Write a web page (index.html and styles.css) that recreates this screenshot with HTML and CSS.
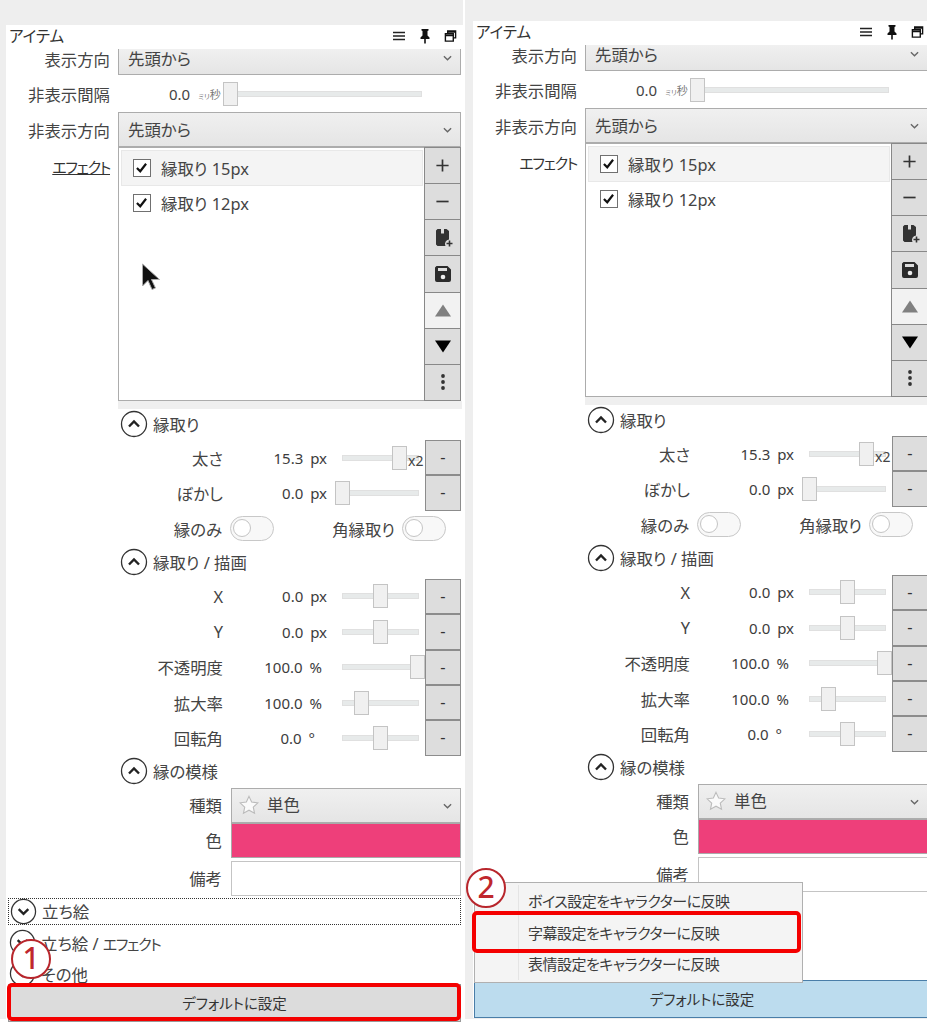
FILE: index.html
```html
<!DOCTYPE html>
<html lang="ja">
<head>
    <meta charset="UTF-8">
    <title>アイテム</title>
    <link rel="stylesheet" href="styles.css">
</head>
<body>

    <svg class="defs" width="0" height="0">
        <symbol id="i-menu" viewBox="0 0 14 12"><path d="M1 2.500h12M1 6h12M1 9.500h12" stroke="#222" stroke-width="1.400"/></symbol>
        <symbol id="i-pin" viewBox="0 0 14 16"><path d="M3.500 1h7v1.500l-1 .5v4.500l2 2v1.500h-9V9.500l2-2V3l-1-.5zM6.200 11h1.600v4.500H6.200z" fill="#111"/></symbol>
        <symbol id="i-float" viewBox="0 0 14 14"><path d="M4 4V1.500h8.500V9H10M1.500 4.500H10V12.500H1.500zM1.500 6.500H10M4 2.800h8.500" fill="none" stroke="#111" stroke-width="1.500"/></symbol>
        <symbol id="i-plus" viewBox="0 0 16 16"><path d="M8 1.500v13M1.500 8h13" stroke="#333" stroke-width="1.800"/></symbol>
        <symbol id="i-minus" viewBox="0 0 16 16"><path d="M1.500 8h13" stroke="#333" stroke-width="1.800"/></symbol>
        <symbol id="i-saveas" viewBox="0 0 18 20"><path d="M1 2.500 2.500 1H6v4.500h3V1h2.500L14 3v8.500a4.500 4.500 0 0 0-3.500 6.500H2.500L1 16.500z" fill="#333"/><path d="M14.500 12.500v6M11.500 15.500h6" stroke="#333" stroke-width="1.600"/></symbol>
        <symbol id="i-save" viewBox="0 0 18 18"><path d="M2.500 1h11L17 4.500V15a2 2 0 0 1-2 2H3a2 2 0 0 1-2-2V2.500zM4 3v3h9V3z" fill="#2b2b2b" fill-rule="evenodd"/><circle cx="9" cy="12" r="2.300" fill="#eee"/></symbol>
        <symbol id="i-up" viewBox="0 0 16 14"><path d="M8 1 16 13H0z" fill="#808080"/></symbol>
        <symbol id="i-down" viewBox="0 0 16 14"><path d="M0 1H16L8 13z" fill="#000"/></symbol>
        <symbol id="i-more" viewBox="0 0 6 18"><circle cx="3" cy="3" r="1.900" fill="#333"/><circle cx="3" cy="9" r="1.900" fill="#333"/><circle cx="3" cy="15" r="1.900" fill="#333"/></symbol>
        <symbol id="i-chev" viewBox="0 0 10 6"><path d="M1 1l4 4 4-4" fill="none" stroke="#666" stroke-width="1.500"/></symbol>
        <symbol id="i-exp-up" viewBox="0 0 28 28"><circle cx="14" cy="14" r="12.500" fill="#fff" stroke="#333" stroke-width="1.300"/><path d="M9 16.500l5-5 5 5" fill="none" stroke="#222" stroke-width="2.400"/></symbol>
        <symbol id="i-exp-down" viewBox="0 0 28 28"><circle cx="14" cy="14" r="12.500" fill="#fff" stroke="#333" stroke-width="1.300"/><path d="M9 11.500l5 5 5-5" fill="none" stroke="#222" stroke-width="2.400"/></symbol>
        <symbol id="i-star" viewBox="0 0 22 22"><path d="M11 1.500l2.900 6.300 6.900.8-5.100 4.700 1.400 6.800L11 16.700l-6.100 3.400 1.400-6.800L1.200 8.600l6.900-.8z" fill="#fafafa" stroke="#bbb" stroke-width="1.200"/></symbol>
        <symbol id="i-check" viewBox="0 0 18 18"><path d="M3.500 9.500l4 4 7-9" fill="none" stroke="#111" stroke-width="2.600"/></symbol>
    </svg>

    <section class="pane pane-left">
        <div class="pane-head">
            <span class="pane-title">アイテム</span>
            <span class="pane-tools">
                <svg class="tool-menu"><use href="#i-menu"/></svg>
                <svg class="tool-pin"><use href="#i-pin"/></svg>
                <svg class="tool-float"><use href="#i-float"/></svg>
            </span>
        </div>
        <div class="pane-body">
            <div class="form-row row-cut">
                <span class="label">表示方向</span>
                <div class="combo combo-cut">先頭から<svg class="chev"><use href="#i-chev"/></svg></div>
            </div>
            <div class="form-row row-interval">
                <span class="label">非表示間隔</span>
                <div class="interval">
                    <span class="interval-val">0.0</span><span class="interval-unit"><small>ミリ</small>秒</span>
                    <div class="slider slider-wide"><i class="thumb thumb-0"></i></div>
                </div>
            </div>
            <div class="form-row row-combo">
                <span class="label">非表示方向</span>
                <div class="combo">先頭から<svg class="chev"><use href="#i-chev"/></svg></div>
            </div>
            <div class="form-row row-effects">
                <span class="label label-top label-link kata">エフェクト</span>
                <div class="effects">
                    <div class="effect-list">
                        <div class="effect effect-on"><span class="check"><svg><use href="#i-check"/></svg></span>縁取り 15px</div>
                        <div class="effect"><span class="check"><svg><use href="#i-check"/></svg></span>縁取り 12px</div>
                    </div>
                    <div class="effect-btns">
                        <div class="sq"><svg class="ic16"><use href="#i-plus"/></svg></div>
                        <div class="sq"><svg class="ic16"><use href="#i-minus"/></svg></div>
                        <div class="sq"><svg class="ic-saveas"><use href="#i-saveas"/></svg></div>
                        <div class="sq"><svg class="ic-save"><use href="#i-save"/></svg></div>
                        <div class="sq sq-off"><svg class="ic-tri"><use href="#i-up"/></svg></div>
                        <div class="sq"><svg class="ic-tri"><use href="#i-down"/></svg></div>
                        <div class="sq"><svg class="ic-more"><use href="#i-more"/></svg></div>
                    </div>
                </div>
            </div>
            <div class="strip"></div>

            <div class="group-head head-a"><svg class="exp"><use href="#i-exp-up"/></svg>縁取り</div>
            <div class="param"><span class="p-label">太さ</span><span class="p-val">15.3 px</span><div class="slider"><i class="thumb thumb-72"></i></div><span class="x2">x2</span><div class="reset">-</div></div>
            <div class="param"><span class="p-label">ぼかし</span><span class="p-val">0.0 px</span><div class="slider"><i class="thumb thumb-0"></i></div><div class="reset">-</div></div>
            <div class="toggles">
                <span class="t-label t-label-a">縁のみ</span><i class="toggle"></i>
                <span class="t-label t-label-b">角縁取り</span><i class="toggle"></i>
            </div>

            <div class="group-head head-b"><svg class="exp"><use href="#i-exp-up"/></svg>縁取り / 描画</div>
            <div class="param"><span class="p-label">X</span><span class="p-val">0.0 px</span><div class="slider"><i class="thumb thumb-mid"></i></div><div class="reset">-</div></div>
            <div class="param"><span class="p-label">Y</span><span class="p-val">0.0 px</span><div class="slider"><i class="thumb thumb-mid"></i></div><div class="reset">-</div></div>
            <div class="param"><span class="p-label">不透明度</span><span class="p-val p-val-pct">100.0 %</span><div class="slider"><i class="thumb thumb-100"></i></div><div class="reset">-</div></div>
            <div class="param"><span class="p-label">拡大率</span><span class="p-val p-val-pct">100.0 %</span><div class="slider"><i class="thumb thumb-25"></i></div><div class="reset">-</div></div>
            <div class="param"><span class="p-label">回転角</span><span class="p-val p-val-deg">0.0 °</span><div class="slider"><i class="thumb thumb-mid"></i></div><div class="reset">-</div></div>

            <div class="group-head head-b"><svg class="exp"><use href="#i-exp-up"/></svg>縁の模様</div>
            <div class="prop"><span class="p-label">種類</span><div class="combo combo-star"><svg class="star"><use href="#i-star"/></svg>単色<svg class="chev"><use href="#i-chev"/></svg></div></div>
            <div class="prop"><span class="p-label">色</span><div class="color"></div></div>
            <div class="prop prop-memo"><span class="p-label">備考</span><div class="memo"></div></div>

            <div class="fold fold-focus"><svg class="exp"><use href="#i-exp-down"/></svg>立ち絵</div>
            <div class="fold fold-mid"><svg class="exp"><use href="#i-exp-down"/></svg><span>立ち絵 / <span class="kata">エフェクト</span></span></div>
            <div class="fold fold-last"><svg class="exp"><use href="#i-exp-down"/></svg>その他</div>
        </div>
        <div class="default-btn default-pressed">デフォルトに設定</div>

        <svg class="cursor" viewBox="0 0 20 28"><path d="M1.500 1v22l5.500-5.500 4 9 3.500-1.500-4-8.500h8z" fill="#111" stroke="#aaa" stroke-width="1"/></svg>
        <div class="mark mark-btn"></div>
        <div class="badge badge-one">1</div>
    </section>

    <div class="shot-gap"></div>

    <section class="pane pane-right">
        <div class="pane-head">
            <span class="pane-title">アイテム</span>
            <span class="pane-tools">
                <svg class="tool-menu"><use href="#i-menu"/></svg>
                <svg class="tool-pin"><use href="#i-pin"/></svg>
                <svg class="tool-float"><use href="#i-float"/></svg>
            </span>
        </div>
        <div class="pane-body">
            <div class="form-row row-cut">
                <span class="label">表示方向</span>
                <div class="combo combo-cut">先頭から<svg class="chev"><use href="#i-chev"/></svg></div>
            </div>
            <div class="form-row row-interval">
                <span class="label">非表示間隔</span>
                <div class="interval">
                    <span class="interval-val">0.0</span><span class="interval-unit"><small>ミリ</small>秒</span>
                    <div class="slider slider-wide"><i class="thumb thumb-0"></i></div>
                </div>
            </div>
            <div class="form-row row-combo">
                <span class="label">非表示方向</span>
                <div class="combo">先頭から<svg class="chev"><use href="#i-chev"/></svg></div>
            </div>
            <div class="form-row row-effects">
                <span class="label label-top kata">エフェクト</span>
                <div class="effects">
                    <div class="effect-list">
                        <div class="effect effect-on"><span class="check"><svg><use href="#i-check"/></svg></span>縁取り 15px</div>
                        <div class="effect"><span class="check"><svg><use href="#i-check"/></svg></span>縁取り 12px</div>
                    </div>
                    <div class="effect-btns">
                        <div class="sq"><svg class="ic16"><use href="#i-plus"/></svg></div>
                        <div class="sq"><svg class="ic16"><use href="#i-minus"/></svg></div>
                        <div class="sq"><svg class="ic-saveas"><use href="#i-saveas"/></svg></div>
                        <div class="sq"><svg class="ic-save"><use href="#i-save"/></svg></div>
                        <div class="sq sq-off"><svg class="ic-tri"><use href="#i-up"/></svg></div>
                        <div class="sq"><svg class="ic-tri"><use href="#i-down"/></svg></div>
                        <div class="sq"><svg class="ic-more"><use href="#i-more"/></svg></div>
                    </div>
                </div>
            </div>
            <div class="strip"></div>

            <div class="group-head head-a"><svg class="exp"><use href="#i-exp-up"/></svg>縁取り</div>
            <div class="param"><span class="p-label">太さ</span><span class="p-val">15.3 px</span><div class="slider"><i class="thumb thumb-72"></i></div><span class="x2">x2</span><div class="reset">-</div></div>
            <div class="param"><span class="p-label">ぼかし</span><span class="p-val">0.0 px</span><div class="slider"><i class="thumb thumb-0"></i></div><div class="reset">-</div></div>
            <div class="toggles">
                <span class="t-label t-label-a">縁のみ</span><i class="toggle"></i>
                <span class="t-label t-label-b">角縁取り</span><i class="toggle"></i>
            </div>

            <div class="group-head head-b"><svg class="exp"><use href="#i-exp-up"/></svg>縁取り / 描画</div>
            <div class="param"><span class="p-label">X</span><span class="p-val">0.0 px</span><div class="slider"><i class="thumb thumb-mid"></i></div><div class="reset">-</div></div>
            <div class="param"><span class="p-label">Y</span><span class="p-val">0.0 px</span><div class="slider"><i class="thumb thumb-mid"></i></div><div class="reset">-</div></div>
            <div class="param"><span class="p-label">不透明度</span><span class="p-val p-val-pct">100.0 %</span><div class="slider"><i class="thumb thumb-100"></i></div><div class="reset">-</div></div>
            <div class="param"><span class="p-label">拡大率</span><span class="p-val p-val-pct">100.0 %</span><div class="slider"><i class="thumb thumb-25"></i></div><div class="reset">-</div></div>
            <div class="param"><span class="p-label">回転角</span><span class="p-val p-val-deg">0.0 °</span><div class="slider"><i class="thumb thumb-mid"></i></div><div class="reset">-</div></div>

            <div class="group-head head-b"><svg class="exp"><use href="#i-exp-up"/></svg>縁の模様</div>
            <div class="prop"><span class="p-label">種類</span><div class="combo combo-star"><svg class="star"><use href="#i-star"/></svg>単色<svg class="chev"><use href="#i-chev"/></svg></div></div>
            <div class="prop"><span class="p-label">色</span><div class="color"></div></div>
            <div class="prop prop-memo"><span class="p-label">備考</span><div class="memo"></div></div>
        </div>
        <div class="default-btn default-hover">デフォルトに設定</div>

        <div class="menu">
            <div class="menu-item">ボイス設定をキャラクターに反映</div>
            <div class="menu-item">字幕設定をキャラクターに反映</div>
            <div class="menu-item">表情設定をキャラクターに反映</div>
        </div>
        <div class="mark mark-menu"></div>
        <div class="badge badge-two">2</div>
    </section>

</body>
</html>
```

FILE: styles.css
```css
html, body { margin: 0; height: 100%; overflow: hidden; }
body {
    display: flex;
    width: 927px;
    height: 1024px;
    padding-left: 6px;
    box-sizing: border-box;
    background: linear-gradient(#eeeeee 1019px, #fff 1019px);
    font-family: "Noto Sans", "Noto Sans CJK JP", sans-serif;
    font-size: 16.4px;
    font-feature-settings: "palt";
    color: #444;
}
.defs { position: absolute; }
.kata { font-size: 15px; letter-spacing: -1.300px; }

/* panes */
.pane { position: relative; flex: 0 0 457px; background: #fff; display: flex; flex-direction: column; }
.pane-left { margin-top: 25px; height: 997px; }
.pane-right { margin-top: 21px; height: 997px; }
.shot-gap { flex: 0 0 2px; margin-right: 8px; background: #fff; }
.pane-head { flex: 0 0 24px; display: flex; align-items: center; justify-content: space-between; padding: 0 6px 2px 3px; box-sizing: border-box; background: #fff; }
.pane-title { font-size: 15.500px; color: #333; line-height: 22px; }
.pane-tools { display: flex; align-items: center; gap: 12px; }
.tool-menu { width: 14px; height: 12px; }
.tool-pin { width: 14px; height: 16px; }
.tool-float { width: 13px; height: 14px; }
.pane-body { flex: 1; min-height: 0; }

/* upper form */
.form-row { display: flex; padding-right: 2px; }
.label { flex: 0 0 104px; text-align: right; align-self: center; white-space: nowrap; }
.label-top { align-self: flex-start; margin-top: 9px; color: #333; }
.label-link { text-decoration: underline; }
.row-cut { height: 27px; }
.row-interval { height: 36px; }
.row-combo { height: 35px; }
.row-effects { height: 254px; }
.row-cut > .label { padding-bottom: 7px; }
.combo {
    position: relative;
    flex: 1;
    margin-left: 8px;
    padding-left: 9px;
    line-height: 34px;
    border: 1px solid #acacac;
    border-width: 1.500px 1px;
    background: linear-gradient(#f0f0f0, #e5e5e5);
    white-space: nowrap;
}
.combo-cut { border-top: 0; height: 26px; line-height: 20px; box-sizing: border-box; }
.chev { position: absolute; right: 8px; top: 14px; width: 9px; height: 6px; }
.combo-cut .chev { top: 6px; }
.interval { display: flex; align-items: center; margin-left: 8px; flex: 1; }
.interval-val { margin-left: 51px; font-size: 15px; }
.interval-unit { flex: 0 0 24px; margin: 0 0 0 8px; font-size: 11px; color: #777; white-space: nowrap; }
.interval-unit small { font-size: 7px; }
.slider { position: relative; height: 6px; background: #e7eaea; border: 1px solid #e0e0e0; box-sizing: border-box; }
.slider-wide { margin-left: 8px; width: 192px; }
.thumb {
    position: absolute;
    top: -10px;
    width: 15px;
    height: 24px;
    box-sizing: border-box;
    background: #f0f0f0;
    border: 1.500px solid #c4c4c4;
}
.thumb-0 { left: -8px; }
.thumb-72 { left: 49px; }
.thumb-mid { left: 30px; }
.thumb-100 { left: 67px; }
.thumb-25 { left: 11px; }

/* effect list */
.effects { flex: 1; margin-left: 8px; display: flex; height: 254px; }
.effect-list { flex: 1; border: 1px solid #acacac; border-right: 0; padding: 2px 1px 2px 2px; box-sizing: border-box; }
.effect { height: 36px; box-sizing: border-box; display: flex; align-items: center; padding-left: 11px; border: 1px solid transparent; color: #444; }
.effect:nth-child(2) { margin-top: -1px; }
.effect-on { background: #f4f4f4; border-color: #e8e8e8; }
.check { width: 18px; height: 18px; box-sizing: border-box; border: 1.500px solid #707070; margin-right: 10px; background: #fff; display: block; }
.check svg { display: block; width: 15px; height: 15px; }
.effect-btns { flex: 0 0 37px; display: flex; flex-direction: column; background: #888; border: 1px solid #888; box-sizing: border-box; gap: 1px; }
.sq { flex: 1; background: #dddddd; display: flex; align-items: center; justify-content: center; }
.sq-off { background: #f2f2f2; }
.ic16 { width: 15px; height: 15px; }
.ic-tri { width: 16px; height: 15px; }
.ic-saveas { width: 18px; height: 20px; margin-left: 2px; }
.ic-save { width: 18px; height: 18px; }
.ic-more { width: 6px; height: 18px; }
.strip { height: 8px; margin: 0 1px 0 112px; background: #efefef; }

/* groups */
.group-head { display: flex; align-items: center; gap: 5px; margin-left: 114px; box-sizing: border-box; padding-bottom: 1px; }
.head-a { height: 31px; }
.head-b { height: 32px; }
.exp { width: 28px; height: 28px; flex: none; }

.param { position: relative; display: flex; align-items: center; height: 35.400px; }
.p-label { flex: 0 0 217px; text-align: right; }
.p-val { flex: 0 0 104px; box-sizing: border-box; text-align: right; font-size: 15px; word-spacing: 3px; color: #3c3c3c; }
.p-val-pct { padding-right: 5px; }
.p-val-deg { padding-right: 12px; }
.param .slider { flex: 0 0 77px; margin-left: 15px; }
.x2 { position: absolute; left: 402px; top: 11px; font-size: 14px; line-height: 20px; }
.reset {
    position: absolute;
    left: 419px;
    top: 0;
    width: 36px;
    height: 100%;
    box-sizing: border-box;
    border: 1px solid #8c8c8c;
    background: #dddddd;
    text-align: center;
    line-height: 32px;
    color: #333;
}
.toggles { display: flex; align-items: center; height: 36px; padding-left: 108px; }
.t-label { white-space: nowrap; text-align: right; box-sizing: border-box; padding-right: 8px; }
.t-label-a { flex: 0 0 116px; }
.t-label-b { flex: 0 0 128px; padding-right: 7px; }
.toggle {
    position: relative;
    width: 44px;
    height: 25px;
    flex: none;
    box-sizing: border-box;
    border: 1.500px solid #c8c8c8;
    border-radius: 13px;
    background: #f8f8f8;
}
.toggle::before {
    content: "";
    position: absolute;
    left: 2px;
    top: 2px;
    width: 18px;
    height: 18px;
    border-radius: 50%;
    background: #fff;
    border: 1px solid #c4c4c4;
    box-sizing: border-box;
}

.prop { display: flex; height: 35px; padding-right: 2px; }
.prop .p-label { flex: 0 0 216px; align-self: center; }
.prop .combo { margin-left: 9px; }
.combo-star { display: flex; align-items: center; gap: 8px; }
.star { width: 20px; height: 20px; margin-left: -2px; }
.color { flex: 1; margin-left: 9px; background: #ee3f7a; border: 1px solid #aaa; box-sizing: border-box; }
.prop-memo { height: 39px; padding-top: 3px; box-sizing: border-box; padding-bottom: 1px; }
.memo { flex: 1; margin-left: 9px; background: #fff; border: 1px solid #c4c4c4; box-sizing: border-box; }

.fold { display: flex; align-items: center; gap: 5px; padding-left: 3px; }
.fold .exp { width: 27px; height: 27px; }
.fold-focus { height: 27px; margin: 1px 2px 0; padding-left: 1px; border: 1px dotted #333; box-sizing: border-box; }
.fold-mid { height: 32px; margin-top: 2px; }
.fold-last { height: 30px; }

.default-btn { flex: 0 0 35px; margin: 0 2px; text-align: center; line-height: 36px; box-sizing: border-box; color: #333; font-size: 14.500px; }
.default-pressed { background: #dcdcdc; border: 1px solid #999; margin-top: -1px; }
.default-hover { background: #bcdcee; border: 1px solid #4a7ea8; margin-left: 1px; margin-right: 0; }

/* overlays */
.cursor { position: absolute; left: 135px; top: 238px; width: 20px; height: 28px; }
.mark { position: absolute; border: 4px solid #f40000; border-radius: 5px; box-sizing: border-box; }
.mark-btn { left: 1px; top: 958px; width: 454px; height: 38px; }
.mark-menu { left: -1px; top: 890px; width: 329px; height: 42px; }
.badge {
    position: absolute;
    width: 40px;
    height: 40px;
    box-sizing: border-box;
    border: 2.500px solid #b8262c;
    border-radius: 50%;
    background: #fff;
    color: #c0272d;
    font-size: 30px;
    font-weight: 500;
    text-align: center;
    line-height: 34px;
}
.badge-one { left: 5px; top: 914px; }
.badge-two { left: -7px; top: 847px; }
.menu {
    position: absolute;
    left: 1px;
    top: 861px;
    width: 329px;
    height: 101px;
    padding-top: 3px;
    box-sizing: border-box;
    background: #f4f4f4;
    border: 1px solid #b0b0b0;
}
.menu::before { content: ""; position: absolute; left: 43px; top: 2px; bottom: 2px; width: 1px; background: #e4e4e4; }
.menu-item { height: 31.500px; line-height: 30px; padding-left: 53px; color: #3c3c3c; font-size: 15px; letter-spacing: -0.500px; }
```
